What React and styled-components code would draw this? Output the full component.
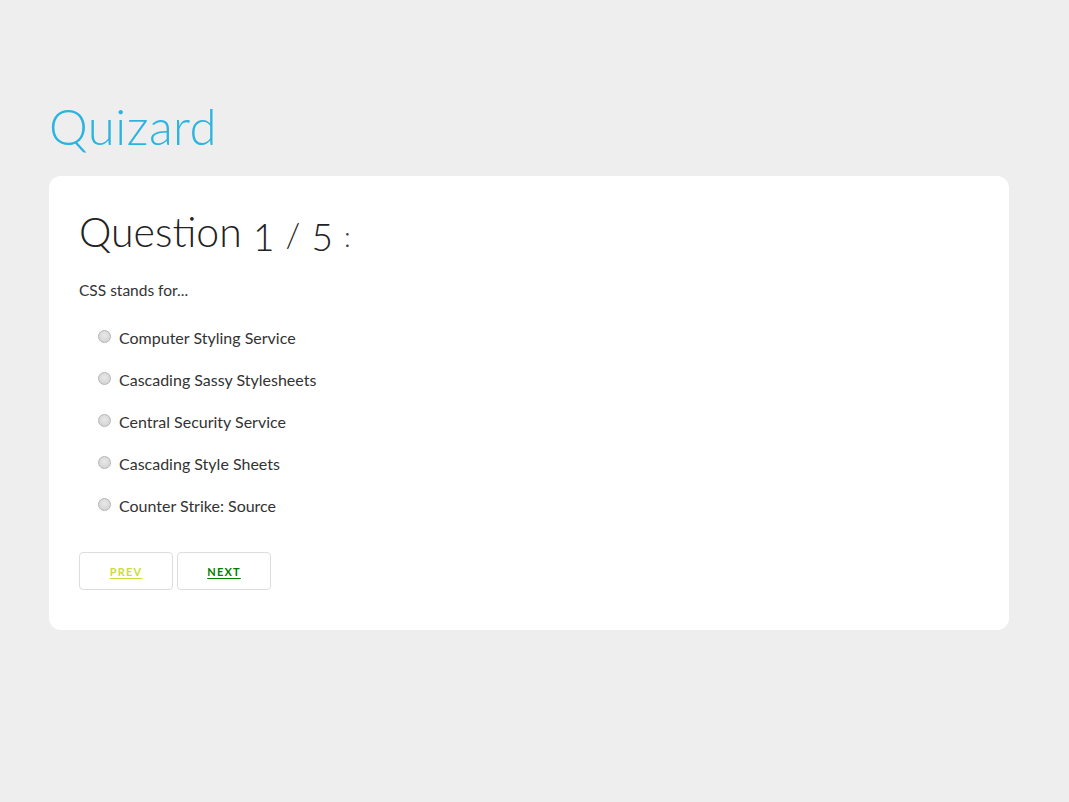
import styled, { createGlobalStyle } from 'styled-components'

const questions = [
  {
    text: 'CSS stands for...',
    options: [
      'Computer Styling Service',
      'Cascading Sassy Stylesheets',
      'Central Security Service',
      'Cascading Style Sheets',
      'Counter Strike: Source',
    ],
  },
]

/*---> Component <---*/
export default function App() {
  const q = questions[0]
  return (
    <>
      <GlobalStyle />
      <Page>
        <Title>Quizard</Title>
        <Card>
          <Heading>
            Question <Num>1</Num> <Slash>/</Slash> <Num>5</Num> <Colon>:</Colon>
          </Heading>
          <Prompt>{q.text}</Prompt>
          <Options>
            {q.options.map((opt, i) => (
              <Option key={i}>
                <Radio type="radio" name="answer" />
                {opt}
              </Option>
            ))}
          </Options>
          <Buttons>
            <NavButton $color="#cddc39">Prev</NavButton>
            <NavButton $color="#008000">Next</NavButton>
          </Buttons>
        </Card>
      </Page>
    </>
  )
}

/*---> Styles <---*/
const GlobalStyle = createGlobalStyle`
  html, body {
    margin: 0;
    background: #eeeeee;
    font-family: Lato, "Open Sans", sans-serif;
  }
`

const Page = styled.div`
  padding: 94px 60px 0 49px;
  width: 960px;
`

const Title = styled.h1`
  margin: 0 0 18px 0;
  font-size: 49px;
  font-weight: 300;
  line-height: 64px;
  color: #2bb4e0;
  letter-spacing: 0.5px;
`

const Card = styled.div`
  background: #ffffff;
  border-radius: 12px;
  padding: 26px 30px 40px 30px;
`

const Heading = styled.h2`
  margin: 0;
  font-size: 41px;
  font-weight: 300;
  line-height: 60px;
  color: #222222;
`

const Num = styled.span`
  font-size: 37px;
  position: relative;
  top: 4px;
`

const Slash = styled.span`
  font-size: 34px;
`

const Colon = styled.span`
  font-size: 28px;
  color: #444;
`

const Prompt = styled.p`
  margin: 14px 0 28px 0;
  font-size: 15.5px;
  line-height: 20px;
  color: #333333;
  font-weight: 400;
`

const Options = styled.div`
  display: flex;
  flex-direction: column;
  gap: 22px;
  padding-left: 19px;
`

const Option = styled.label`
  display: flex;
  align-items: center;
  gap: 8px;
  font-size: 16px;
  line-height: 20px;
  color: #333333;
`

const Radio = styled.input`
  appearance: none;
  margin: 0;
  width: 13px;
  height: 13px;
  border-radius: 50%;
  border: 1px solid #b5b5b5;
  background: radial-gradient(circle at 50% 40%, #e8e8e8 0%, #d6d6d6 70%, #c8c8c8 100%);
  position: relative;
  top: -2px;
`

const Buttons = styled.div`
  display: flex;
  gap: 4px;
  margin-top: 36px;
`

const NavButton = styled.button`
  width: 94px;
  height: 38px;
  background: #ffffff;
  border: 1px solid #dddddd;
  border-radius: 4px;
  font-family: Lato, "Open Sans", sans-serif;
  font-size: 11px;
  font-weight: 700;
  letter-spacing: 1.2px;
  text-transform: uppercase;
  text-decoration: underline;
  text-underline-offset: 2px;
  color: ${(p) => p.$color};
  cursor: pointer;
`
